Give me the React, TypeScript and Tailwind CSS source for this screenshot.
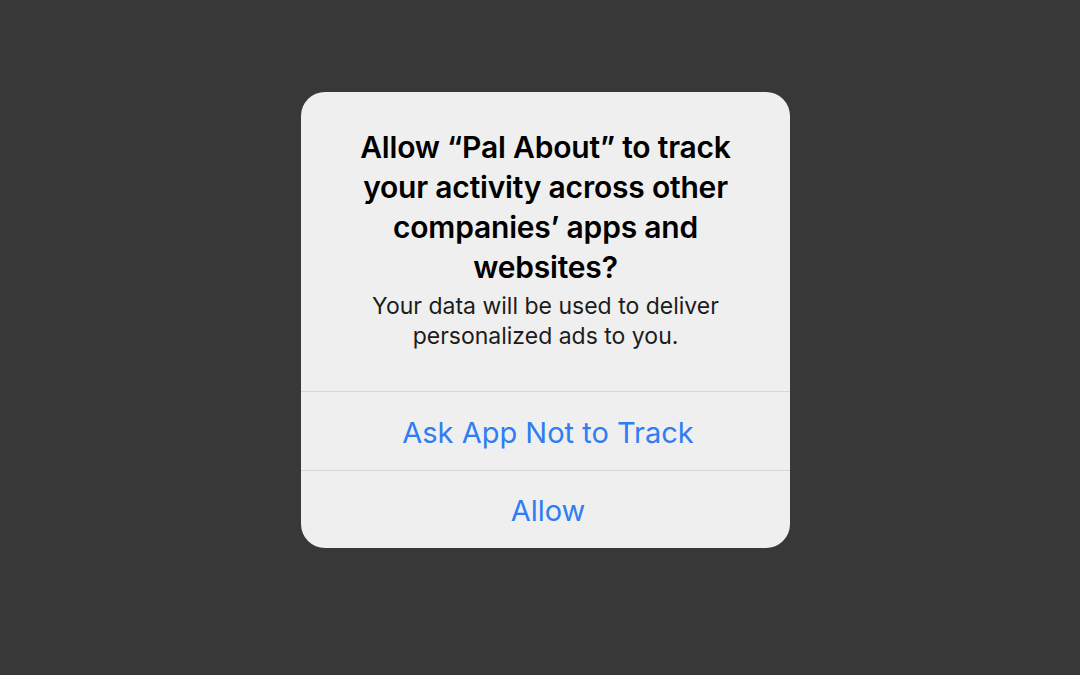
export default function App() {
  return (
    <div className="min-h-[675px] w-full bg-[#383838] pt-[92px]" style={{ fontFamily: "Inter, 'Noto Sans', sans-serif" }}>
      <div className="ml-[301px] w-[489px] rounded-[24px] bg-[#efefef] overflow-hidden">
        <div className="px-[44px] pt-[35px] pb-[40px] text-center">
          <h1 className="text-[30px] leading-[40px] font-semibold text-black tracking-[-0.2px]">
            Allow “Pal About” to track your activity across other companies’ apps and websites?
          </h1>
          <p className="mt-[4px] text-[23px] leading-[30px] text-[#1c1c1c]">
            Your data will be used to deliver personalized ads to you.
          </p>
        </div>
        <button className="block w-full h-[79px] pt-[3px] pl-[5px] border-t border-[#d6d6d6] text-[29px] text-[#2f7df3]">
          Ask App Not to Track
        </button>
        <button className="block w-full h-[78px] pt-[3px] pl-[5px] border-t border-[#d6d6d6] text-[29px] text-[#2f7df3]">
          Allow
        </button>
      </div>
    </div>
  );
}
